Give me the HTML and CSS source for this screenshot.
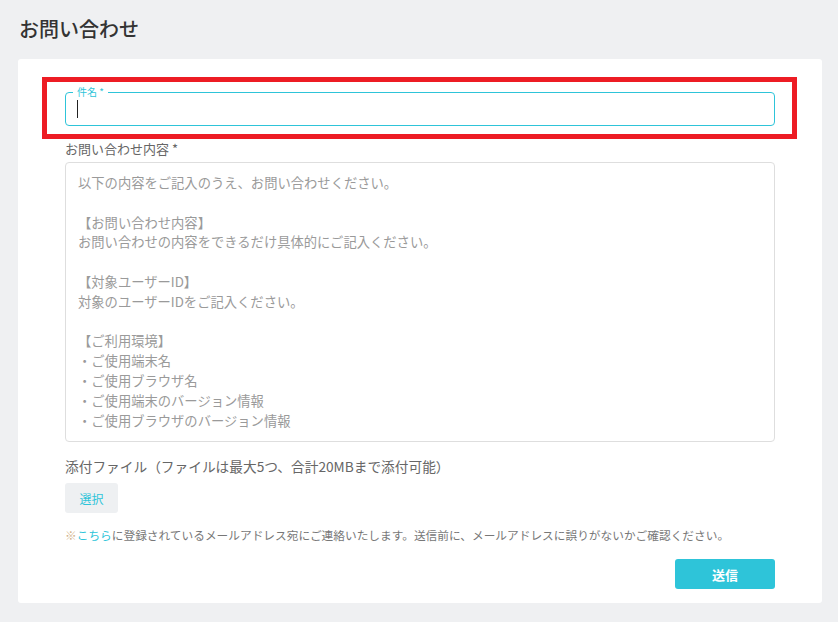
FILE: index.html
```html
<!DOCTYPE html>
<html>
<head>
  <meta charset="utf-8">
  <title>お問い合わせ</title>
  <link rel="stylesheet" href="styles.css">
</head>
<body>

<h1 class="page-title">お問い合わせ</h1>

<form class="contact-card">
  <div class="subject-wrap">
    <fieldset class="subject">
      <legend>件名 *</legend>
      <span class="caret"></span>
    </fieldset>
  </div>

  <label class="field-label" for="body">お問い合わせ内容 *</label>
  <textarea id="body" class="body-input" placeholder="以下の内容をご記入のうえ、お問い合わせください。&#10;&#10;【お問い合わせ内容】&#10;お問い合わせの内容をできるだけ具体的にご記入ください。&#10;&#10;【対象ユーザーID】&#10;対象のユーザーIDをご記入ください。&#10;&#10;【ご利用環境】&#10;・ご使用端末名&#10;・ご使用ブラウザ名&#10;・ご使用端末のバージョン情報&#10;・ご使用ブラウザのバージョン情報"></textarea>

  <p class="attach-label">添付ファイル（ファイルは最大5つ、合計20MBまで添付可能）</p>
  <button type="button" class="select-btn">選択</button>

  <p class="note"><span class="mark">※</span><a href="#">こちら</a>に登録されているメールアドレス宛にご連絡いたします。送信前に、メールアドレスに誤りがないかご確認ください。</p>

  <div class="actions">
    <button type="button" class="send-btn">送信</button>
  </div>
</form>

</body>
</html>
```

FILE: styles.css
```css
body {
  margin: 0;
  padding: 16px 16px 0 18px;
  background-color: #eff0f2;
  font-family: "Noto Sans CJK JP", "Noto Sans", sans-serif;
  color: #555;
}

.page-title {
  margin: 0 0 0 1px;
  font-size: 20px;
  line-height: 26px;
  font-weight: 500;
  color: #333;
}

.contact-card {
  margin-top: 17px;
  width: 710px;
  padding: 28px 47px 14px 47px;
  background: #fff;
  border-radius: 3px;
}

.subject-wrap {
  position: relative;
}

/* red annotation frame around the subject field */
.subject-wrap::after {
  content: "";
  position: absolute;
  top: -10px;
  bottom: -13px;
  left: -23px;
  right: -22px;
  border: 5px solid #ed1c24;
  pointer-events: none;
}

.subject {
  margin: 0;
  padding: 0 12px 0 11px;
  height: 39px;
  box-sizing: border-box;
  border: 1px solid #2ec4d9;
  border-radius: 4px;
  display: flex;
  align-items: center;
}

.subject legend {
  margin-left: -4px;
  padding: 0 4px;
  font-size: 10px;
  line-height: 10px;
  color: #2ec4d9;
}

.caret {
  display: block;
  width: 1px;
  height: 18px;
  margin-top: -4px;
  background: #222;
}

.field-label {
  display: block;
  margin-top: 13px;
  font-size: 13px;
  line-height: 20px;
  color: #666;
}

.body-input {
  display: block;
  margin-top: 3px;
  width: 100%;
  height: 280px;
  box-sizing: border-box;
  padding: 10px 12px;
  border: 1px solid #dedede;
  border-radius: 4px;
  font-family: inherit;
  font-size: 13.3px;
  line-height: 19.8px;
  resize: none;
  outline: none;
}

.body-input::placeholder {
  color: #9a9a9a;
}

.attach-label {
  margin: 14px 0 0;
  font-size: 13.7px;
  line-height: 20px;
  color: #666;
}

.select-btn {
  margin-top: 7px;
  width: 53px;
  height: 30px;
  border: none;
  border-radius: 3px;
  background: #eef0f2;
  color: #2ec4d9;
  font-family: inherit;
  font-size: 12px;
}

.note {
  margin: 13px 0 0;
  font-size: 11.7px;
  line-height: 18px;
  color: #777;
  white-space: nowrap;
}

.note .mark {
  color: #d2b38c;
}

.note a {
  color: #2ec4d9;
  text-decoration: none;
}

.actions {
  display: flex;
  justify-content: flex-end;
  margin-top: 15px;
}

.send-btn {
  width: 100px;
  height: 30px;
  border: none;
  border-radius: 3px;
  background: #2ec4d9;
  color: #fff;
  font-family: inherit;
  font-size: 13px;
  font-weight: bold;
}
```
